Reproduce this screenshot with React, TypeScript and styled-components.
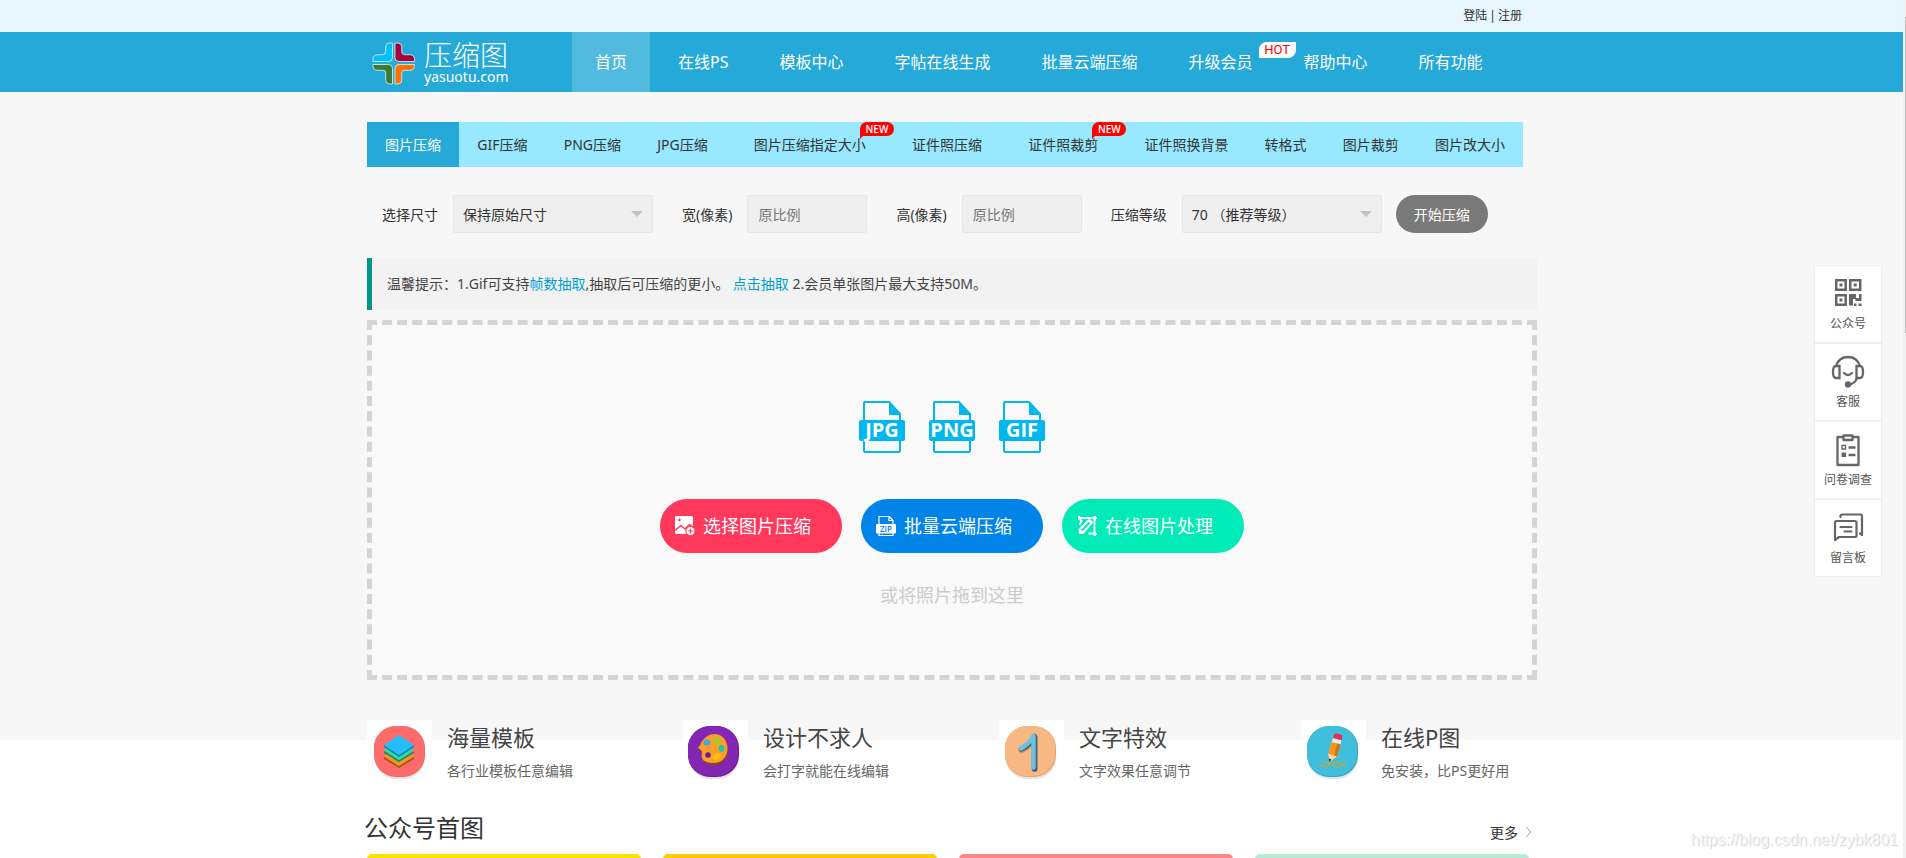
import React from "react";
import styled, { createGlobalStyle } from "styled-components";

const GlobalStyle = createGlobalStyle`
  *, *::before, *::after { box-sizing: border-box; }
  body {
    margin: 0;
    background: #fff;
    color: #333;
    font: 14px/1.5 "Noto Sans", "Noto Sans CJK SC", sans-serif;
  }
  a { color: inherit; text-decoration: none; }
  button, input, select { font: inherit; }
  h2, h3, p { margin: 0; font-weight: 400; }
`;

const Frame = styled.div`
  height: 100vh;
  overflow: hidden;
  padding-right: 2px;
`;

const Container = styled.div`
  width: 1170px;
  max-width: 100%;
  margin: 0 auto;
`;

const TopBar = styled.div`
  height: 32px;
  background: #e8f6ff;
  font-size: 12px;
  line-height: 32px;
`;

const Account = styled(Container)`
  display: flex;
  justify-content: flex-end;
  gap: 2px;
  padding-right: 15px;
`;

const Header = styled.header`
  background: #24a9d8;
`;

const HeaderInner = styled(Container)`
  display: flex;
  height: 60px;
`;

const Logo = styled.a`
  display: flex;
  align-items: center;
  gap: 9px;
  width: 205px;
  padding: 2px 0 0 5px;
  color: #fff;
`;

const LogoText = styled.span`
  display: flex;
  flex-direction: column;
  font-size: 28px;
  line-height: 28px;
  font-weight: 300;

  small {
    font-size: 14px;
    line-height: 16px;
    font-weight: 400;
  }
`;

const Nav = styled.nav`
  display: flex;
  gap: 5px;
`;

const NavLink = styled.a<{ $active?: boolean }>`
  position: relative;
  padding: 0 23px;
  color: #fff;
  font-size: 16px;
  line-height: 60px;
  white-space: nowrap;
  background: ${(p) => (p.$active ? "#50badf" : "transparent")};
`;

const HotBadge = styled.span`
  position: absolute;
  top: 10px;
  right: -20px;
  width: 37px;
  height: 16px;
  border-radius: 8px 0 8px 0;
  background: #fff;
  color: #f00;
  font: 13px/16px Roboto, sans-serif;
  text-align: center;
`;

const Workspace = styled.main`
  height: 648px;
  padding-top: 30px;
  background: #f7f7f7;
`;

const Tabs = styled.nav`
  display: flex;
  width: 1156px;
  max-width: 100%;
  background: #98e9ff;
`;

const Tab = styled.a<{ $active?: boolean; $wide?: boolean }>`
  position: relative;
  flex: 1 0 auto;
  padding: 0 ${(p) => (p.$wide ? 28 : 18)}px;
  line-height: 45px;
  text-align: center;
  white-space: nowrap;
  color: ${(p) => (p.$active ? "#fff" : "#333")};
  background: ${(p) => (p.$active ? "#24a9d8" : "transparent")};
`;

const NewBadge = styled.span`
  position: absolute;
  top: 0;
  right: 0;
  width: 34px;
  height: 14px;
  border-radius: 7px 7px 7px 0;
  background: #f00;
  color: #fff;
  font: 600 10px/14px "Open Sans", sans-serif;
  text-align: center;

  &::after {
    content: "";
    position: absolute;
    left: 0;
    top: 14px;
    border-top: 3px solid #f00;
    border-right: 3px solid transparent;
  }
`;

const OptionsForm = styled.form`
  display: flex;
  align-items: center;
  gap: 14px;
  height: 38px;
  margin: 28px 0 25px;
`;

const Field = styled.label`
  display: flex;
  align-items: center;
  gap: 15px;
  padding-left: 15px;
  white-space: nowrap;
`;

const SelectBox = styled.span`
  position: relative;
  display: block;

  svg {
    position: absolute;
    right: 10px;
    top: 16px;
    pointer-events: none;
  }
`;

const Select = styled.select`
  display: block;
  width: 200px;
  height: 38px;
  padding: 0 9px;
  appearance: none;
  border: 1px solid #e6e6e6;
  border-radius: 2px;
  background: #efefef;
  color: #333;
`;

const SizeInput = styled.input`
  width: 120px;
  height: 38px;
  padding: 0 10px;
  border: 1px solid #e6e6e6;
  border-radius: 2px;
  background: #efefef;

  &::placeholder { color: #757575; }
`;

const StartButton = styled.button`
  width: 92px;
  height: 38px;
  padding: 0;
  border: 0;
  border-radius: 19px;
  background: #7a7a7a;
  color: #fff;
`;

const Tip = styled.p`
  padding: 15px;
  border-left: 5px solid #009688;
  border-radius: 0 2px 2px 0;
  background: #f2f2f2;
  color: #444;
  line-height: 22px;

  a { color: #009fd6; }
`;

const DropZone = styled.section`
  display: flex;
  flex-direction: column;
  align-items: center;
  height: 360px;
  margin-top: 10px;
  padding-top: 76px;
  border: 5px dashed #d4d4d4;
  background: #f9f9f9;
`;

const FormatRow = styled.div`
  display: flex;
  gap: 24px;
  height: 52px;
`;

const ActionRow = styled.div`
  display: flex;
  gap: 19px;
  margin: 46px 0 28px;
`;

const ActionButton = styled.button<{ $color: string }>`
  display: flex;
  align-items: center;
  gap: 6px;
  width: 182px;
  height: 54px;
  padding: 0 0 0 15px;
  border: 0;
  border-radius: 27px;
  background: ${(p) => p.$color};
  color: #fff;
  font-size: 18px;
  white-space: nowrap;
`;

const DropHint = styled.p`
  color: #ccc;
  font-size: 18px;
  line-height: 28px;
`;

const Features = styled(Container)`
  position: relative;
  display: flex;
  gap: 110px;
  margin-top: -20px;
`;

const Feature = styled.a`
  display: flex;
  gap: 15px;
  white-space: nowrap;

  svg { display: block; background: #fff; }
  h3 { font-size: 22px; line-height: 34px; color: #444; }
  p { line-height: 34px; color: #666; }
`;

const SectionHead = styled(Container)`
  display: flex;
  justify-content: space-between;
  align-items: center;
  height: 36px;
  margin-top: 22px;
  padding-right: 4px;

  h2 { margin-left: -3px; font-size: 24px; line-height: 36px; }
`;

const MoreLink = styled.a`
  display: flex;
  align-items: center;
  gap: 7px;
  padding-top: 8px;
`;

const Cards = styled(Container)`
  display: grid;
  grid-template-columns: repeat(4, 1fr);
  gap: 22px;
  margin-top: 8px;
  padding-right: 8px;
`;

const Card = styled.a<{ $color: string }>`
  height: 117px;
  border-radius: 5px;
  background: ${(p) => p.$color};
`;

const SidePanel = styled.aside`
  position: fixed;
  right: 24px;
  top: 265px;
  width: 68px;
`;

const SideLink = styled.a`
  display: flex;
  flex-direction: column;
  align-items: center;
  height: 78px;
  padding-top: 10px;
  border: 1px solid #eee;
  background: #fff;
  color: #555;
  font-size: 12px;
  line-height: 24px;
`;

const Watermark = styled.span`
  position: fixed;
  right: 8px;
  bottom: 8px;
  color: #f4f4f4;
  font: 16px/20px "Liberation Sans", sans-serif;
  text-shadow: 1px 1px 1px #d4d4d4;
`;

const ScrollRail = styled.div`
  position: fixed;
  inset: 0 0 0 auto;
  width: 3px;
  padding: 17px 0 0 2px;
  background: #f1f1f1;

  &::before {
    content: "";
    display: block;
    height: 316px;
    background: #c1c1c1;
  }
`;

const LogoMark = () => (
  <svg width="43" height="43" viewBox="-1 -1 44 44" stroke="#c9e6ee" strokeWidth="1">
    <path fill="#00bfff" d="M20 0h-3q-4 0-4 4v5q0 3-3 3H5q-5 0-5 5v2h16q4 0 4-4z" />
    <path fill="#a8003c" d="M22.500 0h3q4 0 4 4v5q0 3 3 3h5q5 0 5 5v2h-16q-4 0-4-4z" />
    <path fill="#3d7a35" d="M20 42h-3q-4 0-4-4v-8q0-2-3-2H5q-5 0-5-5v-1h16q4 0 4 4z" />
    <path fill="#ff7300" d="M22.500 42h3q4 0 4-4v-8q0-2 3-2h5q5 0 5-5v-1h-16q-4 0-4 4z" />
  </svg>
);

const Caret = () => (
  <svg width="12" height="6" viewBox="0 0 12 6"><path d="M0 0h12L6 6z" fill="#c2c2c2" /></svg>
);

const FormatIcon = ({ name }: { name: string }) => (
  <svg width="46" height="52" viewBox="0 0 46 52">
    <path d="M5 1h25l11 12V50q0 1-1 1H6q-1 0-1-1V2q0-1 1-1z" fill="none" stroke="#00b7ee" strokeWidth="2" />
    <path d="M30 1l11 13H30z" fill="#00b7ee" />
    <rect y="19" width="46" height="21" rx="2" fill="#00b7ee" />
    <text x="23" y="36" fill="#fff" fontFamily="Open Sans, sans-serif" fontWeight="700" fontSize="20" textAnchor="middle">{name}</text>
  </svg>
);

const AddImageIcon = () => (
  <svg width="22" height="22" viewBox="0 0 22 22">
    <rect x="0" y="1" width="18" height="18" rx="1.500" fill="#fff" />
    <g stroke="#ff385c" fill="none" strokeWidth="1.500">
      <path d="M0 15.500l6-5 4 3.500 4.500-4.500 5 4" />
      <path d="M4.500 3.500v3M3 5h3" strokeWidth="1.200" />
      <circle cx="15.500" cy="16" r="4.500" fill="#fff" strokeWidth="1.200" />
      <path d="M15.500 13.500v5M13 16h5" strokeWidth="1.200" />
    </g>
  </svg>
);

const ZipIcon = () => (
  <svg width="22" height="22" viewBox="0 0 22 22">
    <path d="M3 9V1.500h10.500L17 5.500V9M13 1.500v4h4M3 18v2.500h14V18" fill="none" stroke="#fff" strokeWidth="1.200" />
    <rect x="0" y="9" width="20" height="9.500" rx="1" fill="#fff" />
    <text x="10" y="16.500" fill="#0084e8" fontFamily="Open Sans, sans-serif" fontWeight="600" fontSize="8" textAnchor="middle">ZIP</text>
  </svg>
);

const EditImageIcon = () => (
  <svg width="22" height="22" viewBox="0 0 22 22" fill="none" stroke="#fff">
    <path d="M2.500 3h15v15.500h-6" strokeWidth="1.800" />
    <path d="M2 3.500l2.500 2.500-2 4" strokeWidth="1.800" />
    <path d="M2 18.500v-4.500l9-9q1.500-1 2.800 0L16 7.500 6.500 18.500z" fill="#fff" strokeWidth="0.500" />
    <path d="M5 15.500l7.500-8" stroke="#00ebb8" strokeWidth="2" />
    <path d="M9.500 18.500l5.500-6" strokeWidth="0" />
    <path d="M2 1v4M1 3h4M18 1v4M16 3h4M18 17v4M16 19h4" strokeWidth="2" />
  </svg>
);

const Blob = ({ x, color, edge }: { x: number; color: string; edge: string }) => (
  <>
    <rect x={x + 1} y="9" width="50" height="50" rx="21" fill="#000" opacity="0.100" />
    <rect x={x} y="6" width="51" height="51" rx="22" fill={edge} />
    <rect x={x} y="6" width="50" height="50" rx="22" fill={color} />
  </>
);

const LayersArt = () => (
  <svg width="65" height="65" viewBox="0 0 65 65">
    <Blob x={7} color="#ff6b6b" edge="#f36464" />
    <path d="M17 37l15 9 15-9v2L32 48l-15-9z" fill="#a8530c" />
    <path d="M32 26l15 10-15 10-15-10z" fill="#f09a1c" />
    <path d="M17 31l15 9 15-9v2L32 42l-15-9z" fill="#0b8f74" />
    <path d="M32 21l15 9-15 10-15-10z" fill="#1fe0a8" />
    <path d="M17 25l15 10 15-10v2L32 37 17 27z" fill="#0d7fb5" />
    <path d="M32 15l15 10-15 10-15-10z" fill="#25bdf8" />
  </svg>
);

const PaletteArt = () => (
  <svg width="65" height="65" viewBox="0 0 65 65">
    <Blob x={5} color="#8327b3" edge="#6f1f9b" />
    <path d="M31 15c8 0 14 6 14 15s-6 15-14 15c-5 0-11-2-12-6-1-3 1-5-1-8-1-1-2-1-3-3 3-1 2-5 5-8 3-4 7-5 11-5z" fill="#8a4512" />
    <path d="M31 14c8 0 13.500 6 13.500 14.500S38.500 43 31 43c-5 0-11-1-12-5-1-3 1-5-1-8-1-1-2-1-3-3 3-1 2-4 5-7 3-4 7-6 11-6z" fill="#fb9d2b" />
    <ellipse cx="24" cy="22.500" rx="3.500" ry="3" fill="#3ba6e0" />
    <ellipse cx="34" cy="20.500" rx="4" ry="2.500" fill="#91d624" transform="rotate(15 34 20.500)" />
    <ellipse cx="38.500" cy="28.500" rx="2.800" ry="3.500" fill="#1fc5a4" />
    <path d="M31 35l4-2 3 2-2 4-4 1-2-2z" fill="#ffc800" />
    <circle cx="25" cy="35" r="2.800" fill="#6a1b9a" />
  </svg>
);

const NumberArt = () => (
  <svg width="65" height="65" viewBox="0 0 65 65" fill="none" strokeLinecap="round" strokeLinejoin="round">
    <Blob x={6} color="#f8b884" edge="#eba66f" />
    <path d="M22.500 30.500Q31 26.500 36 18v31" stroke="#d99865" strokeWidth="6" />
    <path d="M22.500 29Q31 25 35.500 16.500V49" stroke="#34607a" strokeWidth="5.500" />
    <path d="M22 28.500Q30 24 34.500 16V47.500" stroke="#6fc0e0" strokeWidth="4.500" />
  </svg>
);

const PencilArt = () => (
  <svg width="65" height="65" viewBox="0 0 65 65">
    <Blob x={6} color="#3fbfdb" edge="#2fa9c7" />
    <path d="M33 14q4-1.500 8.500 1.500l-1 5-8.500-2z" fill="#e0305c" />
    <path d="M32 18l8.500 2.500-1 4-9-2z" fill="#e8e8ee" />
    <path d="M30.500 22l9 2.500L36 37l-9-3z" fill="#f59a1f" />
    <path d="M36 23.500l3.500 1L36 37l-3-1z" fill="#cf7413" />
    <path d="M27 33.500l9 3-7.500 5.500z" fill="#fbd2a4" />
    <path d="M27.700 38.500l2.600 1-1.800 2.500z" fill="#222" />
    <path d="M21 43q3-3 6 0t6 0 6 0 6-1M17 46h2l2-1q3 5 6 1t6 0 6 0 6 0" fill="none" stroke="#c9a53a" strokeWidth="1.200" />
  </svg>
);

const QrIcon = () => (
  <svg width="36" height="36" viewBox="0 0 36 36" fill="none" stroke="#666" strokeWidth="2.500">
    <path d="M6.200 4.200h9.500v9.500H6.200zM20.200 4.200h10v9.500h-10zM6.200 19.200h9.500v9.500H6.200z" />
    <path d="M9.500 7.500h3v3h-3zM23.700 7.500h3v3h-3zM9.500 22.500h3v3h-3zM19 18h7v4h3v-4h2.500v7h-6v-2H23v6.500h-4zM24 27.500h2.500V30H24zM28.500 27.500h3V30h-3z" fill="#666" stroke="none" />
  </svg>
);

const HeadsetIcon = () => (
  <svg width="36" height="36" viewBox="0 0 36 36" fill="none" stroke="#666" strokeWidth="2.300" strokeLinecap="round">
    <path d="M6 12Q9 3 18 3t12 9" />
    <path d="M9.500 12H6q-3 0-3 6t3 6h3.500zM26.500 12H30q3 0 3 6t-3 6h-3.500z" />
    <path d="M14 19q4 4 8 0" />
    <path d="M27 24q-2 6-8 6.500" />
    <circle cx="18" cy="30.500" r="2" fill="#666" />
  </svg>
);

const SurveyIcon = () => (
  <svg width="36" height="36" viewBox="0 0 36 36" fill="none" stroke="#666" strokeWidth="2.300">
    <path d="M13 5H7.500v28h21V5H23" strokeLinejoin="round" />
    <path d="M13.500 3.500h9v4.500h-9z" strokeLinejoin="round" />
    <path d="M18.500 15.500h7M18.500 23h7" />
    <path d="M12 13.500h3.500V17H12z" strokeWidth="1.300" />
    <path d="M11.500 20.500h4.500V25h-4.500z" fill="#666" stroke="none" />
  </svg>
);

const MessageIcon = () => (
  <svg width="36" height="36" viewBox="0 0 36 36" fill="none" stroke="#666" strokeWidth="2.200" strokeLinecap="round" strokeLinejoin="round">
    <path d="M10.500 7V6q0-1.500 1.500-1.500h18.500q1.500 0 1.500 1.500v19l-2-1.500" />
    <path d="M5 30V12.500Q5 11 6.500 11H25q1.500 0 1.500 1.500v13Q26.500 27 25 27H9z" />
    <path d="M10.500 17h11M14.500 21.500h7" />
  </svg>
);

const navItems = [
  { label: "首页", active: true },
  { label: "在线PS" },
  { label: "模板中心" },
  { label: "字帖在线生成" },
  { label: "批量云端压缩" },
  { label: "升级会员", hot: true },
  { label: "帮助中心" },
  { label: "所有功能" },
];

const tabItems = [
  { label: "图片压缩", active: true },
  { label: "GIF压缩" },
  { label: "PNG压缩" },
  { label: "JPG压缩" },
  { label: "图片压缩指定大小", isNew: true },
  { label: "证件照压缩" },
  { label: "证件照裁剪", isNew: true },
  { label: "证件照换背景" },
  { label: "转格式" },
  { label: "图片裁剪" },
  { label: "图片改大小" },
];

const features = [
  { title: "海量模板", text: "各行业模板任意编辑", Art: LayersArt },
  { title: "设计不求人", text: "会打字就能在线编辑", Art: PaletteArt },
  { title: "文字特效", text: "文字效果任意调节", Art: NumberArt },
  { title: "在线P图", text: "免安装，比PS更好用", Art: PencilArt },
];

const sideItems = [
  { label: "公众号", Icon: QrIcon },
  { label: "客服", Icon: HeadsetIcon },
  { label: "问卷调查", Icon: SurveyIcon },
  { label: "留言板", Icon: MessageIcon },
];

const cardColors = ["#ffe100", "#ffc90a", "#f58a87", "#b9ead6"];

export default function App() {
  return (
    <Frame>
      <GlobalStyle />
      <TopBar>
        <Account>
          <a href="#login">登陆</a>
          <span>|</span>
          <a href="#register">注册</a>
        </Account>
      </TopBar>
      <Header>
        <HeaderInner>
          <Logo href="#home">
            <LogoMark />
            <LogoText>压缩图<small>yasuotu.com</small></LogoText>
          </Logo>
          <Nav>
            {navItems.map((item) => (
              <NavLink key={item.label} href="#nav" $active={item.active}>
                {item.label}
                {item.hot && <HotBadge>HOT</HotBadge>}
              </NavLink>
            ))}
          </Nav>
        </HeaderInner>
      </Header>

      <Workspace>
        <Container>
          <Tabs>
            {tabItems.map((item) => (
              <Tab key={item.label} href="#tab" $active={item.active} $wide={item.isNew}>
                {item.label}
                {item.isNew && <NewBadge>NEW</NewBadge>}
              </Tab>
            ))}
          </Tabs>

          <OptionsForm onSubmit={(e) => e.preventDefault()}>
            <Field>
              选择尺寸
              <SelectBox>
                <Select defaultValue="origin"><option value="origin">保持原始尺寸</option></Select>
                <Caret />
              </SelectBox>
            </Field>
            <Field>宽(像素)<SizeInput placeholder="原比例" /></Field>
            <Field>高(像素)<SizeInput placeholder="原比例" /></Field>
            <Field>
              压缩等级
              <SelectBox>
                <Select defaultValue="70"><option value="70">70 （推荐等级）</option></Select>
                <Caret />
              </SelectBox>
            </Field>
            <StartButton type="submit">开始压缩</StartButton>
          </OptionsForm>

          <Tip>
            温馨提示：1.Gif可支持<a href="#frames">帧数抽取</a>,抽取后可压缩的更小。 <a href="#extract">点击抽取</a> 2.会员单张图片最大支持50M。
          </Tip>

          <DropZone>
            <FormatRow>
              <FormatIcon name="JPG" />
              <FormatIcon name="PNG" />
              <FormatIcon name="GIF" />
            </FormatRow>
            <ActionRow>
              <ActionButton type="button" $color="#ff385c"><AddImageIcon />选择图片压缩</ActionButton>
              <ActionButton type="button" $color="#0084e8"><ZipIcon />批量云端压缩</ActionButton>
              <ActionButton type="button" $color="#00ebb8"><EditImageIcon />在线图片处理</ActionButton>
            </ActionRow>
            <DropHint>或将照片拖到这里</DropHint>
          </DropZone>
        </Container>
      </Workspace>

      <Features>
        {features.map(({ title, text, Art }) => (
          <Feature key={title} href="#feature">
            <Art />
            <div>
              <h3>{title}</h3>
              <p>{text}</p>
            </div>
          </Feature>
        ))}
      </Features>

      <SectionHead>
        <h2>公众号首图</h2>
        <MoreLink href="#more">
          更多
          <svg width="8" height="12" viewBox="0 0 8 12" fill="none" stroke="#aaa"><path d="M1 1l5 5-5 5" /></svg>
        </MoreLink>
      </SectionHead>
      <Cards>
        {cardColors.map((color) => (
          <Card key={color} href="#card" $color={color} />
        ))}
      </Cards>

      <SidePanel>
        {sideItems.map(({ label, Icon }) => (
          <SideLink key={label} href="#side"><Icon />{label}</SideLink>
        ))}
      </SidePanel>
      <Watermark>https://blog.csdn.net/zybk801</Watermark>
      <ScrollRail />
    </Frame>
  );
}
